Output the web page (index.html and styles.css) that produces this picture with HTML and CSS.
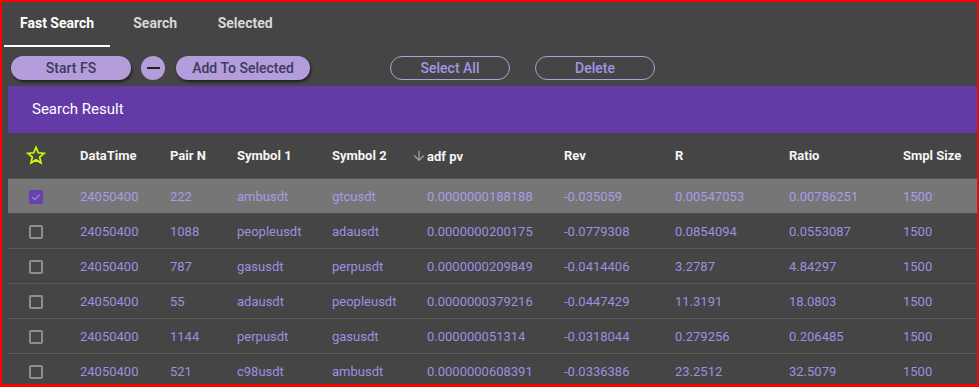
FILE: index.html
```html
<!DOCTYPE html>
<html lang="en">
<head>
    <meta charset="UTF-8">
    <title>Fast Search</title>
    <link rel="stylesheet" href="styles.css">
</head>
<body>
<div class="frame">
    <div class="tabs">
        <div class="tab active">Fast Search</div>
        <div class="tab">Search</div>
        <div class="tab">Selected</div>
    </div>

    <div class="toolbar">
        <button class="btn filled btn-start">Start FS</button>
        <button class="btn round" title="Collapse"><span class="minus"></span></button>
        <button class="btn filled btn-add">Add To Selected</button>
        <button class="btn outline btn-all">Select All</button>
        <button class="btn outline btn-delete">Delete</button>
    </div>

    <div class="panel">
        <div class="panel-title">Search Result</div>
        <table class="results">
            <colgroup>
                <col class="c-check">
                <col class="c-date">
                <col class="c-pair">
                <col class="c-sym1">
                <col class="c-sym2">
                <col class="c-adf">
                <col class="c-rev">
                <col class="c-r">
                <col class="c-ratio">
                <col>
            </colgroup>
            <thead>
                <tr>
                    <th class="check-col">
                        <svg class="star" width="22" height="21" viewBox="0 0 24 24">
                            <path d="M12 2.8l2.6 6.1 6.6.6-5 4.4 1.5 6.5L12 17l-5.7 3.4 1.5-6.5-5-4.4 6.6-.6z" fill="none" stroke="#c6ff00" stroke-width="2" stroke-linejoin="miter"/>
                        </svg>
                    </th>
                    <th>DataTime</th>
                    <th>Pair N</th>
                    <th>Symbol 1</th>
                    <th>Symbol 2</th>
                    <th><svg class="sort" width="16" height="16" viewBox="0 0 24 24"><path d="M20 12l-1.41-1.41L13 16.17V4h-2v12.17l-5.58-5.59L4 12l8 8 8-8z" fill="#9e9e9e"/></svg>adf pv</th>
                    <th>Rev</th>
                    <th>R</th>
                    <th>Ratio</th>
                    <th>Smpl Size</th>
                </tr>
            </thead>
            <tbody>
                <tr class="selected">
                    <td class="check-col"><span class="box checked"><svg width="12" height="12" viewBox="0 0 24 24"><path d="M4.5 12.5l5 5 10-10" fill="none" stroke="#9a93ad" stroke-width="2.4"/></svg></span></td>
                    <td>24050400</td><td>222</td><td>ambusdt</td><td>gtcusdt</td>
                    <td>0.0000000188188</td><td>-0.035059</td><td>0.00547053</td><td>0.00786251</td><td>1500</td>
                </tr>
                <tr>
                    <td class="check-col"><span class="box"></span></td>
                    <td>24050400</td><td>1088</td><td>peopleusdt</td><td>adausdt</td>
                    <td>0.0000000200175</td><td>-0.0779308</td><td>0.0854094</td><td>0.0553087</td><td>1500</td>
                </tr>
                <tr>
                    <td class="check-col"><span class="box"></span></td>
                    <td>24050400</td><td>787</td><td>gasusdt</td><td>perpusdt</td>
                    <td>0.0000000209849</td><td>-0.0414406</td><td>3.2787</td><td>4.84297</td><td>1500</td>
                </tr>
                <tr>
                    <td class="check-col"><span class="box"></span></td>
                    <td>24050400</td><td>55</td><td>adausdt</td><td>peopleusdt</td>
                    <td>0.0000000379216</td><td>-0.0447429</td><td>11.3191</td><td>18.0803</td><td>1500</td>
                </tr>
                <tr>
                    <td class="check-col"><span class="box"></span></td>
                    <td>24050400</td><td>1144</td><td>perpusdt</td><td>gasusdt</td>
                    <td>0.000000051314</td><td>-0.0318044</td><td>0.279256</td><td>0.206485</td><td>1500</td>
                </tr>
                <tr>
                    <td class="check-col"><span class="box"></span></td>
                    <td>24050400</td><td>521</td><td>c98usdt</td><td>ambusdt</td>
                    <td>0.0000000608391</td><td>-0.0336386</td><td>23.2512</td><td>32.5079</td><td>1500</td>
                </tr>
            </tbody>
        </table>
    </div>
</div>
</body>
</html>
```

FILE: styles.css
```css
html, body {
    margin: 0;
    padding: 0;
    background: #454545;
}
body {
    font-family: Roboto, "Liberation Sans", Arial, sans-serif;
    width: 979px;
    height: 387px;
    overflow: hidden;
}
.frame {
    box-sizing: border-box;
    width: 979px;
    height: 387px;
    border: 2px solid #ff0000;
    border-bottom-width: 3px;
    overflow: hidden;
}

/* tabs */
.tabs {
    display: flex;
    margin-left: 2px;
    height: 45px;
}
.tab {
    box-sizing: border-box;
    min-width: 90px;
    padding: 0 16px;
    height: 45px;
    line-height: 43px;
    text-align: center;
    font-size: 14px;
    font-weight: 700;
    color: #d8d8d8;
    border-bottom: 2px solid transparent;
}
.tab.active {
    color: #ffffff;
    border-bottom-color: #ffffff;
}

/* buttons */
.toolbar {
    display: flex;
    align-items: center;
    margin: 9px 0 0 9px;
    height: 24px;
}
.btn {
    box-sizing: border-box;
    height: 24px;
    border-radius: 12px;
    font-family: inherit;
    font-size: 14px;
    font-weight: 500;
    padding: 0;
    cursor: pointer;
}
.filled {
    background: #b39ddb;
    color: #3d3a5c;
    border: none;
    box-shadow: 1px 2px 3px rgba(0, 0, 0, 0.55);
}
.outline {
    background: transparent;
    color: #a493e6;
    border: 1px solid #b39ddb;
}
.btn-start { width: 120px; }
.btn-add { width: 134px; margin-left: 11px; }
.btn-all { width: 120px; margin-left: 80px; }
.btn-delete { width: 120px; margin-left: 25px; }
.round {
    width: 24px;
    margin-left: 10px;
    background: #b39ddb;
    border: none;
    border-radius: 50%;
    display: flex;
    align-items: center;
    justify-content: center;
}
.minus {
    display: block;
    width: 13px;
    height: 2px;
    background: #222;
}

/* result panel */
.panel {
    margin: 6px 0 0 6px;
}
.panel-title {
    background: #643aa6;
    color: #ffffff;
    height: 47px;
    line-height: 47px;
    padding-left: 24px;
    font-size: 15px;
}
.results {
    width: 100%;
    border-collapse: collapse;
    table-layout: fixed;
}
.c-check { width: 72px; }
.c-date { width: 90px; }
.c-pair { width: 67px; }
.c-sym1 { width: 95px; }
.c-sym2 { width: 95px; }
.c-adf { width: 137px; }
.c-rev { width: 111px; }
.c-r { width: 114px; }
.c-ratio { width: 114px; }
.results th,
.results td {
    padding: 0;
    text-align: left;
    white-space: nowrap;
}
.results th {
    height: 45px;
    font-size: 13px;
    font-weight: 700;
    color: #f4f4f4;
    border-bottom: 1px solid #555;
}
.results td {
    height: 34px;
    font-size: 13px;
    color: #9d8fe0;
    border-bottom: 1px solid #5a5a5a;
}
.results tr.selected td {
    background: #767676;
    color: #a89ce6;
    border-bottom-color: #4a4a4a;
}
.results td.check-col {
    padding-left: 21px;
}
.results th.check-col {
    padding-left: 17px;
}
.star {
    display: block;
    margin-top: -1px;
}
.sort {
    vertical-align: -3px;
    margin-left: -16px;
}
.box {
    box-sizing: border-box;
    display: inline-block;
    width: 14px;
    height: 14px;
    border: 2px solid #8e8e8e;
    border-radius: 2px;
    vertical-align: middle;
}
.box.checked {
    background: #6a3fb6;
    border-color: #6a3fb6;
}
.box.checked svg {
    display: block;
    margin: -1px 0 0 -1px;
}
```
